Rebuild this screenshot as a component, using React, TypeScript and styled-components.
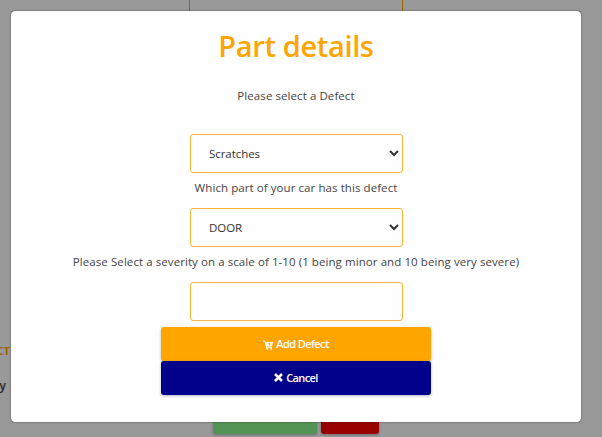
import React from "react";
import styled, { createGlobalStyle } from "styled-components";

const GlobalStyle = createGlobalStyle`
  * { box-sizing: border-box; }
  body { margin: 0; background: #fff; overflow: hidden; font-family: "Open Sans", "Noto Sans", sans-serif; }
`;

const Page = styled.div`
  position: relative;
  height: 437px;
  overflow: hidden;
  display: flex;
  flex-direction: column;
`;

const PageField = styled.div`
  width: 214px;
  height: 30px;
  margin: -10px 0 0 189px;
  border: 1px solid orange;
  border-radius: 3px;
`;

const PageLabel = styled.div<{ $accent?: boolean }>`
  width: ${(p) => (p.$accent ? 10 : 6)}px;
  height: 20px;
  margin-top: ${(p) => (p.$accent ? 321 : 15)}px;
  display: flex;
  justify-content: flex-end;
  white-space: nowrap;
  font-size: ${(p) => (p.$accent ? 11 : 12)}px;
  line-height: 20px;
  font-weight: ${(p) => (p.$accent ? 700 : 600)};
  color: ${(p) => (p.$accent ? "orange" : "#444")};
`;

const PageActions = styled.div`
  display: flex;
  gap: 4px;
  margin: 16px 0 0 213px;
`;

const PageButton = styled.div<{ $width: number; $color: string }>`
  width: ${(p) => p.$width}px;
  height: 22px;
  border-radius: 3px;
  background: ${(p) => p.$color};
  box-shadow: 0 1px 3px rgba(0, 0, 0, 0.3);
`;

const Overlay = styled.div`
  position: absolute;
  inset: 0;
  padding: 11px 21px 15px 11px;
  background: rgba(0, 0, 0, 0.4);
`;

const Dialog = styled.form`
  height: 411px;
  display: flex;
  flex-direction: column;
  align-items: center;
  background: #fefefe;
  border: 1px solid #fefefe;
  border-radius: 4px;
  box-shadow: 0 0 2px rgba(0, 0, 0, 0.55);
`;

const Title = styled.h1`
  margin: 12px 0 0;
  height: 43px;
  font-size: 29px;
  line-height: 43px;
  font-weight: 600;
  letter-spacing: -0.35px;
  white-space: nowrap;
  color: orange;
`;

const Label = styled.label<{ $gap: number; $height: number }>`
  margin-top: ${(p) => p.$gap}px;
  height: ${(p) => p.$height}px;
  font-size: 11.5px;
  line-height: 20px;
  letter-spacing: 0.075px;
  white-space: nowrap;
  color: #444;
`;

const Select = styled.select`
  width: 213px;
  height: 39px;
  margin-left: 1px;
  padding: 0 0 0 14px;
  border: 1px solid #fbb43a;
  border-radius: 3px;
  background-color: #fefefe;
  color: #333;
  font: 11.5px "Open Sans", "Noto Sans", sans-serif;
  letter-spacing: -0.05px;
`;

const Input = styled.input`
  width: 213px;
  height: 39px;
  margin-left: 1px;
  padding: 0 18px;
  border: 1px solid #fbb43a;
  border-radius: 3px;
  background: #fefefe;
`;

const Actions = styled.div`
  width: 270px;
  margin-top: 6px;
  display: flex;
  flex-direction: column;
`;

const Button = styled.button<{ $color: string }>`
  height: 34px;
  padding: 0 0 1px;
  display: flex;
  align-items: center;
  justify-content: center;
  gap: 3px;
  border: 0;
  border-radius: 3px;
  background: ${(p) => p.$color};
  box-shadow: 0 1px 3px rgba(0, 0, 60, 0.3);
  color: #fff;
  font: 600 11px "Open Sans", "Noto Sans", sans-serif;
  letter-spacing: -0.6px;
`;

const CartIcon = () => (
  <svg width="10" height="12" viewBox="0 -2 10 12" fill="currentColor">
    <path d="M0 .8h2l.4 1.1H10L9 6.4H3.9l.2.8h4.7v.8H3.3L1.6 1.8H0z" />
    <circle cx="4.2" cy="8.8" r="1" />
    <circle cx="8.1" cy="8.8" r="1" />
    <path d="M6 2.6v1H5v.8h1v1h.8v-1h1v-.8h-1v-1z" fill="orange" />
  </svg>
);

const CloseIcon = () => (
  <svg width="9" height="9" viewBox="0 0 9 9" fill="none" stroke="currentColor" strokeWidth="2.5">
    <path d="M1 1l7 7M8 1L1 8" />
  </svg>
);

export default function App() {
  return (
    <Page>
      <GlobalStyle />
      <PageField />
      <PageLabel $accent>CT</PageLabel>
      <PageLabel>y</PageLabel>
      <PageActions>
        <PageButton $width={104} $color="#8af58f" />
        <PageButton $width={58} $color="red" />
      </PageActions>
      <Overlay>
        <Dialog>
          <Title>Part details</Title>
          <Label htmlFor="defect" $gap={19} $height={48}>
            Please select a Defect
          </Label>
          <Select id="defect" defaultValue="Scratches">
            <option>Scratches</option>
          </Select>
          <Label htmlFor="part" $gap={5} $height={30}>
            Which part of your car has this defect
          </Label>
          <Select id="part" defaultValue="DOOR">
            <option>DOOR</option>
          </Select>
          <Label htmlFor="severity" $gap={5} $height={30}>
            Please Select a severity on a scale of 1-10 (1 being minor and 10 being very severe)
          </Label>
          <Input id="severity" />
          <Actions>
            <Button type="button" $color="orange"><CartIcon />Add Defect</Button>
            <Button type="button" $color="darkblue"><CloseIcon />Cancel</Button>
          </Actions>
        </Dialog>
      </Overlay>
    </Page>
  );
}
